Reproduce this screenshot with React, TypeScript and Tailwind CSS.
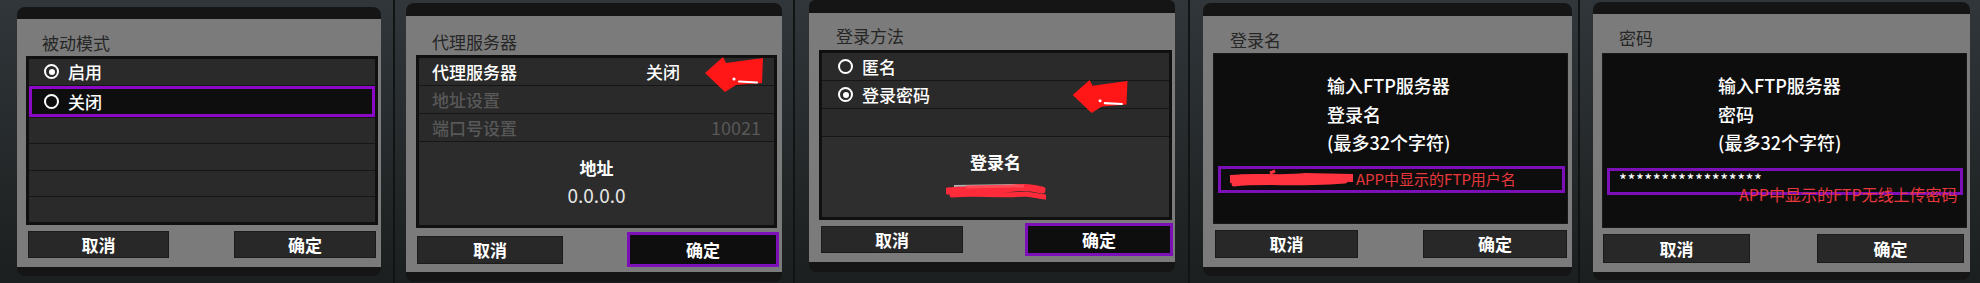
import type { ReactNode } from "react";

function Arrow({ className }: { className: string }) {
  return (
    <svg viewBox="0 0 60 36" className={className}>
      <polygon points="0,16 18,0 21,6 58,1 57,26 31,28 20,35" fill="#ff1616" />
      <circle cx="29" cy="22" r="1.6" fill="#fff" />
      <line x1="34" y1="24.5" x2="52" y2="25.5" stroke="#fff" strokeWidth="2.2" strokeLinecap="round" />
    </svg>
  );
}

function Scribble({ className }: { className: string }) {
  return (
    <svg viewBox="0 0 100 17" className={className} preserveAspectRatio="none">
      <path d="M8 3 L70 2 L82 4" stroke="#e8e8e8" strokeWidth="2" fill="none" opacity="0.7" />
      <path d="M2 8 C20 5 40 9 60 6 S85 5 96 7" stroke="#ff2b3a" strokeWidth="7" fill="none" strokeLinecap="round" />
      <path d="M6 12 C30 10 55 13 80 11 L99 14" stroke="#ff2b3a" strokeWidth="5" fill="none" strokeLinecap="round" />
      <path d="M20 4 L78 3" stroke="#ff4a55" strokeWidth="3" fill="none" />
    </svg>
  );
}

function UserScribble() {
  return (
    <svg viewBox="0 0 123 22" className="w-[123px] h-[22px] shrink-0" preserveAspectRatio="none">
      <path d="M2 14 C10 8 20 16 30 12 S50 16 60 12 S80 17 95 13" stroke="#f2f2f2" strokeWidth="3" fill="none" />
      <path d="M1 11 C25 8 50 12 75 9 L122 10" stroke="#ff3340" strokeWidth="8" fill="none" strokeLinecap="round" />
      <path d="M4 16 C30 13 60 16 100 14 L115 13" stroke="#ff3340" strokeWidth="5" fill="none" strokeLinecap="round" />
      <path d="M40 5 L45 3" stroke="#ff3340" strokeWidth="3" fill="none" />
    </svg>
  );
}

function Radio({ on }: { on?: boolean }) {
  return (
    <span className="w-[15px] h-[15px] rounded-full border-2 border-white flex items-center justify-center shrink-0">
      {on && <span className="w-[6px] h-[6px] rounded-full bg-white" />}
    </span>
  );
}

function Btn({ children, className }: { children: ReactNode; className: string }) {
  return (
    <div className={"flex items-center justify-center text-white font-bold text-[17px] " + className}>
      {children}
    </div>
  );
}

const plain = "bg-[#282828] border border-[#1b1b1b]";
const focus = "bg-[#0e0e0e] border-[3px] border-[#7d0fb8]";
const col = "h-full shrink-0 bg-gradient-to-b from-[#30363a] to-[#1c1f1f]";

export default function App() {
  return (
    <div className="w-[1980px] h-[283px] flex overflow-hidden bg-[#222626] font-['Noto_Sans_CJK_SC',sans-serif]">
      {/* 被动模式 */}
      <div className={col + " w-[393px] pl-[17px] pr-[12px] pt-[7px]"}>
        <div className="rounded-[8px] bg-[#151515] pt-[12px] pb-[9px]">
          <div className="bg-[#7b7b7b] h-[248px] flex flex-col">
            <div className="h-[37px] pt-[12px] pl-[25px] text-[17px] leading-[24px] text-[#262626]">被动模式</div>
            <div className="ml-[9px] mr-[3px] h-[169px] border-[3px] border-[#101010] bg-[#161616] flex flex-col gap-px">
              <div className="flex-1 bg-[#2a2a2a] flex items-center gap-[9px] pl-[15px] text-white font-medium text-[17px]">
                <Radio on />
                <span>启用</span>
              </div>
              <div className="flex-1 bg-[#0e0e0e] border-[3px] border-[#8a08c6] flex items-center gap-[9px] pl-[12px] text-white font-medium text-[17px]">
                <Radio />
                <span>关闭</span>
              </div>
              <div className="flex-1 bg-[#2a2a2a]" />
              <div className="flex-1 bg-[#2a2a2a]" />
              <div className="flex-1 bg-[#2a2a2a]" />
              <div className="flex-1 bg-[#2a2a2a]" />
            </div>
            <div className="flex justify-between mt-[6px] ml-[11px] mr-[5px]">
              <Btn className={plain + " w-[141px] h-[27px]"}>取消</Btn>
              <Btn className={plain + " w-[142px] h-[27px]"}>确定</Btn>
            </div>
          </div>
        </div>
      </div>

      {/* 代理服务器 */}
      <div className={col + " w-[400px] border-l-2 border-[#121414] pl-[11px] pr-[11px] pt-[3px]"}>
        <div className="rounded-[8px] bg-[#151515] pt-[13px] pb-[10px]">
          <div className="bg-[#7b7b7b] h-[256px] flex flex-col">
            <div className="h-[39px] pt-[14px] pl-[26px] text-[17px] leading-[24px] text-[#262626]">代理服务器</div>
            <div className="relative ml-[10px] mr-[5px] h-[173px] border-[3px] border-[#101010] bg-[#161616] flex flex-col gap-px">
              <div className="h-[27px] shrink-0 bg-[#2a2a2a] flex items-center pl-[13px] text-white font-medium text-[17px]">
                <span className="w-[214px]">代理服务器</span>
                <span>关闭</span>
              </div>
              <div className="h-[27px] shrink-0 bg-[#2a2a2a] flex items-center pl-[13px] text-[#585858] font-medium text-[17px]">地址设置</div>
              <div className="h-[27px] shrink-0 bg-[#2a2a2a] flex items-center justify-between pl-[13px] pr-[13px] text-[#585858] font-medium text-[17px]">
                <span>端口号设置</span>
                <span className="text-[18px] font-normal">10021</span>
              </div>
              <div className="flex-1 bg-[#2c2c2c] flex flex-col items-center pt-[14px]">
                <span className="text-white font-bold text-[17px] leading-[24px]">地址</span>
                <span className="mt-[3px] text-[#e6e6e6] text-[19px] leading-[24px]">0.0.0.0</span>
              </div>
              <Arrow className="absolute left-[286px] top-[-1px] w-[60px] h-[36px]" />
            </div>
            <div className="flex justify-between items-center mt-[4px] ml-[11px] mr-[3px]">
              <Btn className={plain + " w-[146px] h-[28px]"}>取消</Btn>
              <Btn className={focus + " w-[152px] h-[35px]"}>确定</Btn>
            </div>
          </div>
        </div>
      </div>

      {/* 登录方法 */}
      <div className={col + " w-[395px] border-l-2 border-[#121414] pl-[14px] pr-[13px] pt-0"}>
        <div className="rounded-b-[8px] rounded-t-[6px] bg-[#151515] pt-[13px] pb-[10px]">
          <div className="bg-[#7b7b7b] h-[249px] flex flex-col">
            <div className="h-[37px] pt-[11px] pl-[27px] text-[17px] leading-[24px] text-[#262626]">登录方法</div>
            <div className="relative ml-[10px] mr-[3px] h-[170px] border-[3px] border-[#101010] bg-[#161616] flex flex-col gap-px">
              <div className="h-[27px] shrink-0 bg-[#2a2a2a] flex items-center gap-[9px] pl-[16px] text-white font-medium text-[17px]">
                <Radio />
                <span>匿名</span>
              </div>
              <div className="h-[27px] shrink-0 bg-[#2a2a2a] flex items-center gap-[9px] pl-[16px] text-white font-medium text-[17px]">
                <Radio on />
                <span>登录密码</span>
              </div>
              <div className="h-[27px] shrink-0 bg-[#2a2a2a]" />
              <div className="flex-1 bg-[#2e2e2e] flex flex-col items-center pt-[13px]">
                <span className="text-white font-bold text-[17px] leading-[24px]">登录名</span>
                <Scribble className="mt-[9px] w-[100px] h-[17px]" />
              </div>
              <Arrow className="absolute left-[250px] top-[27px] w-[58px] h-[34px]" />
            </div>
            <div className="flex justify-between items-center mt-[3px] ml-[12px] mr-[2px]">
              <Btn className={plain + " w-[142px] h-[27px]"}>取消</Btn>
              <Btn className={focus + " w-[148px] h-[33px]"}>确定</Btn>
            </div>
          </div>
        </div>
      </div>

      {/* 登录名 */}
      <div className={col + " w-[390px] border-l-2 border-[#121414] pl-[13px] pr-[6px] pt-[3px]"}>
        <div className="rounded-[8px] bg-[#151515] pt-[13px] pb-[9px]">
          <div className="bg-[#7b7b7b] h-[251px] flex flex-col">
            <div className="h-[37px] pt-[12px] pl-[27px] text-[17px] leading-[24px] text-[#262626]">登录名</div>
            <div className="ml-[10px] mr-[4px] h-[171px] bg-[#0d0d0d] border border-[#181818] flex flex-col">
              <div className="pt-[17px] pl-[113px] text-white font-medium text-[18px] leading-[28.5px]">
                <div>输入FTP服务器</div>
                <div>登录名</div>
                <div>(最多32个字符)</div>
              </div>
              <div className="mt-[9px] ml-[4px] mr-[2px] h-[27px] border-[3px] border-[#7d0fb8] flex items-center pl-[9px]">
                <UserScribble />
                <span className="ml-[3px] text-[15px] text-[#e8383c] leading-[18px] whitespace-nowrap">APP中显示的FTP用户名</span>
              </div>
            </div>
            <div className="flex justify-between mt-[6px] ml-[12px] mr-[5px]">
              <Btn className={plain + " w-[143px] h-[28px]"}>取消</Btn>
              <Btn className={plain + " w-[144px] h-[28px]"}>确定</Btn>
            </div>
          </div>
        </div>
      </div>

      {/* 密码 */}
      <div className={col + " w-[402px] border-l-2 border-[#121414] pl-[13px] pr-[10px] pt-[2px]"}>
        <div className="rounded-[8px] bg-[#151515] pt-[12px] pb-[8px]">
          <div className="bg-[#7b7b7b] h-[258px] flex flex-col">
            <div className="h-[39px] pt-[12px] pl-[26px] text-[17px] leading-[24px] text-[#262626]">密码</div>
            <div className="ml-[9px] mr-[3px] h-[175px] bg-[#0d0d0d] border border-[#181818] flex flex-col">
              <div className="pt-[17px] pl-[115px] text-white font-medium text-[18px] leading-[28.5px]">
                <div>输入FTP服务器</div>
                <div>密码</div>
                <div>(最多32个字符)</div>
              </div>
              <div className="relative mt-[11px] ml-[4px] mr-[3px] h-[27px] border-[3px] border-[#7d0fb8] pl-[9px]">
                <span className="block text-white text-[17px] leading-[18px] tracking-[0.5px]">*****************</span>
                <span className="absolute left-[129px] top-[13px] text-[16px] text-[#e8383c] leading-[20px] whitespace-nowrap">APP中显示的FTP无线上传密码</span>
              </div>
            </div>
            <div className="flex justify-between mt-[6px] ml-[10px] mr-[6px]">
              <Btn className={plain + " w-[147px] h-[29px]"}>取消</Btn>
              <Btn className={plain + " w-[147px] h-[29px]"}>确定</Btn>
            </div>
          </div>
        </div>
      </div>
    </div>
  );
}
